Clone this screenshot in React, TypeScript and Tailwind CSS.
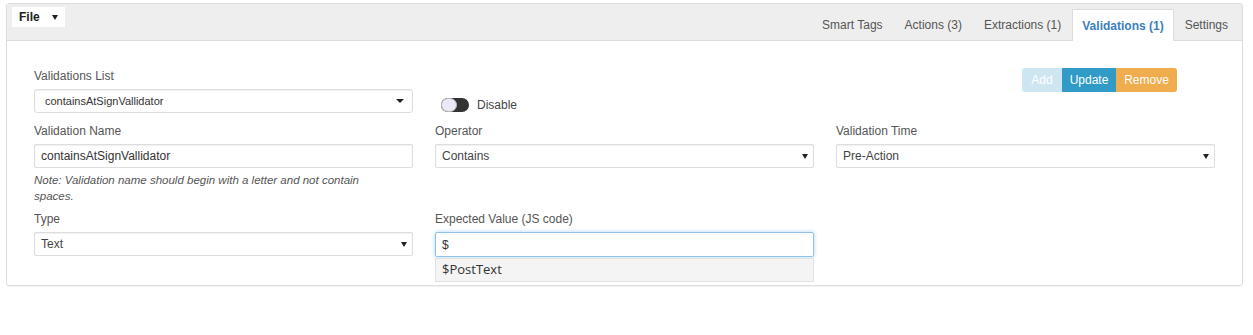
import React from "react";

const TABS = [
  { label: "Smart Tags" },
  { label: "Actions (3)" },
  { label: "Extractions (1)" },
  { label: "Validations (1)", active: true },
  { label: "Settings" },
];

function Caret({ wide }: { wide?: boolean }) {
  return wide ? (
    <svg width="8" height="4" viewBox="0 0 8 4" className="shrink-0">
      <path d="M0 0 L8 0 L4 4 Z" fill="#222" />
    </svg>
  ) : (
    <svg width="6" height="5" viewBox="0 0 6 5" className="shrink-0">
      <path d="M0 0 L6 0 L3 5 Z" fill="#222" />
    </svg>
  );
}

function Select({ value, list }: { value: string; list?: boolean }) {
  return (
    <div
      className={
        list
          ? "flex h-6 items-center justify-between rounded-[3px] border border-[#ddd] bg-white pl-[10px] pr-[8px] shadow-[inset_0_1px_1px_rgba(0,0,0,0.06)]"
          : "flex h-6 items-center justify-between rounded-[2px] border border-[#ddd] bg-white pl-[6px] pr-[5px] shadow-[inset_0_1px_1px_rgba(0,0,0,0.06)]"
      }
    >
      <span className={list ? "text-[11px] text-[#333]" : "text-[12px] text-[#444]"}>{value}</span>
      <Caret wide={list} />
    </div>
  );
}

function Label({ children }: { children: React.ReactNode }) {
  return <div className="mb-[5px] text-[12px] leading-4 text-[#555]">{children}</div>;
}

export default function App() {
  return (
    <div className="h-[335px] w-[1253px] bg-white pl-[6px] pt-[3px] font-['Liberation_Sans',Arial,sans-serif]">
      <div className="relative h-[283px] w-[1237px] rounded-[3px] border border-[#ddd] shadow-[0_1px_1px_rgba(0,0,0,0.05)]">
        {/* Header */}
        <div className="flex h-[37px] items-start justify-between border-b border-[#ddd] bg-[#eee]">
          <button className="ml-[5px] mt-[3px] flex h-5 w-[53px] items-center gap-[12px] bg-white pl-[7px] text-[12px] font-bold text-[#222]">
            File
            <Caret />
          </button>
          <div className="mr-[3px] flex h-full items-end">
            {TABS.map((t) =>
              t.active ? (
                <div
                  key={t.label}
                  className="-mb-px flex h-[32px] items-center border-x border-t border-[#ddd] bg-white px-[9px] text-[12px] font-bold text-[#3a7fc0]"
                >
                  {t.label}
                </div>
              ) : (
                <div key={t.label} className="flex h-[31px] items-center px-[11px] text-[12px] text-[#555]">
                  {t.label}
                </div>
              ),
            )}
          </div>
        </div>

        {/* Body */}
        <div className="grid grid-cols-3 items-start gap-x-[22px] px-[27px] pt-[27px]">
          {/* Row 1 */}
          <div>
            <Label>Validations List</Label>
            <Select value="containsAtSignVallidator" list />
          </div>
          <div className="flex items-center gap-[8px] pl-[6px] pt-[28px]">
            <div className="relative h-[14px] w-[28px] rounded-full bg-[#333]">
              <div className="absolute left-0 top-0 h-[14px] w-[16px] rounded-full border border-[#bbb] bg-[#ebe9f7]" />
            </div>
            <span className="text-[12px] text-[#444]">Disable</span>
          </div>
          <div className="flex justify-end pr-[38px]">
            <div className="flex h-6 text-[12px] text-white">
              <div className="flex w-[40px] items-center justify-center rounded-l-[3px] bg-[#cde6f2]">Add</div>
              <div className="flex w-[54px] items-center justify-center bg-[#2f9bc6]">Update</div>
              <div className="flex w-[61px] items-center justify-center rounded-r-[3px] bg-[#f0ad4e]">Remove</div>
            </div>
          </div>

          {/* Row 2 */}
          <div className="mt-[9px]">
            <Label>Validation Name</Label>
            <div className="flex h-6 items-center rounded-[2px] border border-[#ddd] bg-white pl-[6px] text-[12px] text-[#333] shadow-[inset_0_1px_1px_rgba(0,0,0,0.06)]">
              containsAtSignVallidator
            </div>
            <p className="mt-[4px] w-[365px] text-[11.5px] italic leading-4 text-[#555]">
              Note: Validation name should begin with a letter and not contain spaces.
            </p>
          </div>
          <div className="mt-[9px]">
            <Label>Operator</Label>
            <Select value="Contains" />
          </div>
          <div className="mt-[9px]">
            <Label>Validation Time</Label>
            <Select value="Pre-Action" />
          </div>

          {/* Row 3 */}
          <div className="mt-[7px]">
            <Label>Type</Label>
            <Select value="Text" />
          </div>
          <div className="relative mt-[7px]">
            <Label>Expected Value (JS code)</Label>
            <div className="flex h-[25px] items-center rounded-[2px] border border-[#8ec2ec] bg-white pl-[6px] text-[12px] text-[#333] shadow-[0_0_4px_rgba(102,175,233,0.55)]">
              $
            </div>
            <div className="absolute left-0 right-0 top-[47px] flex h-[24px] items-center border border-[#e2e2e2] bg-[#f4f4f4] pl-[6px] font-['Open_Sans',sans-serif] text-[13px] text-[#333]">
              $PostText
            </div>
          </div>
          <div />
        </div>
      </div>
    </div>
  );
}
